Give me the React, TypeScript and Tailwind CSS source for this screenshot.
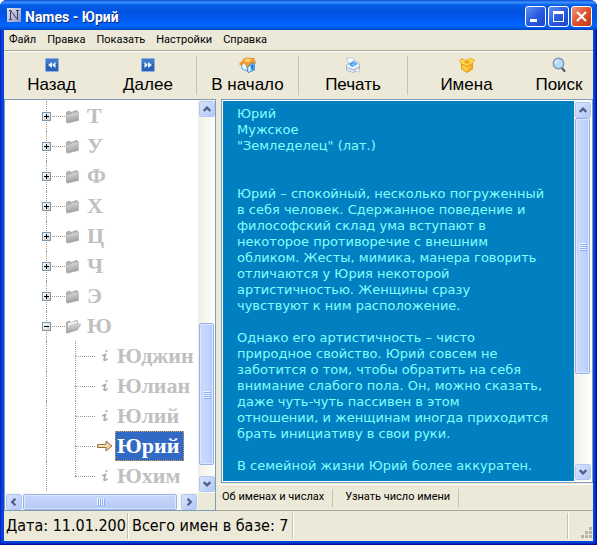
import React from 'react';

const bioText = `Юрий
Мужское
"Земледелец" (лат.)


Юрий – спокойный, несколько погруженный
в себя человек. Сдержанное поведение и
философский склад ума вступают в
некоторое противоречие с внешним
обликом. Жесты, мимика, манера говорить
отличаются у Юрия некоторой
артистичностью. Женщины сразу
чувствуют к ним расположение.

Однако его артистичность – чисто
природное свойство. Юрий совсем не
заботится о том, чтобы обратить на себя
внимание слабого пола. Он, можно сказать,
даже чуть-чуть пассивен в этом
отношении, и женщинам иногда приходится
брать инициативу в свои руки.

В семейной жизни Юрий более аккуратен.`;

const menuItems = ['Файл', 'Правка', 'Показать', 'Настройки', 'Справка'];
const letters = ['Т', 'У', 'Ф', 'Х', 'Ц', 'Ч', 'Э'];
const names = ['Юджин', 'Юлиан', 'Юлий', 'Юрий', 'Юхим'];
const selectedName = 'Юрий';

function AppIcon() {
    return (
        <svg width="14" height="14" viewBox="0 0 14 14">
            <defs>
                <linearGradient id="appIcon" x1="0" y1="0" x2="1" y2="1">
                    <stop offset="0" stopColor="#e4e6f4" />
                    <stop offset="1" stopColor="#8d97bd" />
                </linearGradient>
            </defs>
            <rect width="14" height="14" fill="url(#appIcon)" />
            <path d="M2 2.5h2.5M3.500 2.500v9M2 11.500h3M3.500 2.500l7 9M10.500 11.500v-9M9 2.500h3" stroke="#38406a" fill="none" />
        </svg>
    );
}

function SkipIcon({ forward = false }: { forward?: boolean }) {
    return (
        <svg width="16" height="16" viewBox="0 0 16 16">
            <rect x="1" y="1" width="14" height="14" rx="1.500" fill="#8fb0dc" />
            <rect x="2" y="2" width="12" height="12" fill="#2a62b8" />
            <path d="M2 2h12v5H2z" fill="#3f7acb" />
            {forward ? (
                <path d="M4.500 5v6L8 8zM8 5v6l4-3z" fill="#e8f2ff" />
            ) : (
                <path d="M8 5v6L4 8zM11.500 5v6L8 8z" fill="#e8f2ff" />
            )}
        </svg>
    );
}

function HomeIcon() {
    return (
        <svg width="17" height="16" viewBox="0 0 17 16">
            <path d="M2.500 8L6 4.500l5 5V15L3 12z" fill="#e8f6ff" stroke="#4aa9e8" />
            <path d="M8 10l4-6 3.500 3.500V13L9 15.500z" fill="#57aef0" stroke="#2474c8" strokeWidth=".7" />
            <path d="M9.500 10.500l2-1.500v5l-2 1z" fill="#fff" />
            <path d="M12.500 8.500l1.500-1v4l-1.500 1z" fill="#1a5cb4" />
            <path d="M.5 7L6 1l9 .5 1.500 5-4-1.500L8 10 5.500 5.500 2 8.500z" fill="#f9a22b" stroke="#d9791c" strokeWidth=".7" />
            <path d="M6 1.500l7 .5-2 2.500-5 .5z" fill="#ffd070" />
        </svg>
    );
}

function PrinterIcon() {
    return (
        <svg width="16" height="16" viewBox="0 0 16 16">
            <path d="M1.500 1.500l6-1 3 5-6 2z" fill="#fff" stroke="#a9c9ec" />
            <path d="M1.500 8l8-4.500 5 3.500v5L8 15.500 1.500 13z" fill="#eef4fc" stroke="#8aa8cc" strokeWidth=".8" />
            <path d="M4 7l5-2.500L12.500 7 7 10z" fill="#2e94ec" />
            <path d="M6 7.500l3-1.500 1.500 1-3 1.500z" fill="#9bd4ff" />
            <path d="M2 10.500L8 13l6-3" fill="none" stroke="#9aaac6" />
            <path d="M8 13l5 2 2-1.500-2-1.500z" fill="#fff" stroke="#9aaac6" strokeWidth=".6" />
        </svg>
    );
}

function BoxIcon() {
    return (
        <svg width="16" height="16" viewBox="0 0 16 16">
            <path d="M2.500 6.500l5.500 2 5.500-2v5.500L8 15.500 2.500 12z" fill="#fdc82e" stroke="#d48c10" strokeWidth=".8" />
            <path d="M8 8.500l5.500-2V12L8 15.500z" fill="#f2a81c" />
            <path d="M.5 3.500L3 1.500l3 2 4-1.500 2.500-.5 3 1.500-2 3.500L8 9 2.500 7z" fill="#ffdc52" stroke="#e09c14" strokeWidth=".8" />
            <path d="M4.500 5L8 3.500 12 5 8 7z" fill="#e8a420" />
            <path d="M6.500 10.500l2 2 2.500-3" fill="none" stroke="#ffee9a" />
        </svg>
    );
}

function SearchIcon() {
    return (
        <svg width="16" height="16" viewBox="0 0 16 16">
            <path d="M10.500 10.500l3 3.500" stroke="#54585f" strokeWidth="2.200" strokeLinecap="round" />
            <circle cx="7.500" cy="6.500" r="5.200" fill="#b4dcfa" stroke="#8393b4" strokeWidth="1.400" />
            <path d="M4.500 6.500a3 3 0 0 1 3-3" stroke="#eaf7ff" fill="none" strokeWidth="1.300" />
        </svg>
    );
}

function FolderIcon({ open = false }: { open?: boolean }) {
    return (
        <svg width="16" height="15" viewBox="0 0 16 15" className="shrink-0">
            <defs>
                <linearGradient id="folder" x1="0" y1="0" x2="0.300" y2="1">
                    <stop offset="0" stopColor="#e4e4e4" />
                    <stop offset="1" stopColor="#9c9c9c" />
                </linearGradient>
            </defs>
            <path d="M1 3l3.500-1.500L6 3l5.500-2 1.500 1v3L2 14 1 13z" fill="#b0b0b0" />
            {open ? (
                <>
                    <path d="M3 4l9-2v5l-9 3z" fill="#ededed" />
                    <path d="M1 13.500L4.500 7 10 5.500l1-.5h5L12.500 11 2 14.200z" fill="url(#folder)" stroke="#a4a4a4" strokeWidth=".5" />
                </>
            ) : (
                <path d="M1.500 6L6 5l1.500-1.500L13.500 3v8.500L2 14.200z" fill="url(#folder)" stroke="#a8a8a8" strokeWidth=".5" />
            )}
        </svg>
    );
}

function InfoIcon() {
    return (
        <svg width="8" height="12" viewBox="0 0 8 12">
            <path d="M4.500 1h2" stroke="#a8a8a8" strokeWidth="1.600" />
            <path d="M1 6l3.500-1.500L3 9.500c0 1.500 2 1 3.500-1" fill="none" stroke="#a8a8a8" strokeWidth="1.500" />
        </svg>
    );
}

function ArrowIcon() {
    return (
        <svg width="16" height="12" viewBox="0 0 16 12">
            <path d="M.5 4.500h8.500v-3.500l6 5-6 5V7.500H.5z" fill="#f6cf92" stroke="#8f7048" />
            <path d="M2 5.500h8V4" stroke="#fff0cf" fill="none" />
        </svg>
    );
}

const arrowPaths = {
    up: 'M4 9.500L7.500 6 11 9.500',
    down: 'M4 5.500L7.500 9 11 5.500',
    left: 'M9 4L5.500 7.500 9 11',
    right: 'M6 4l3.500 3.500L6 11',
};

function ScrollButton({ dir }: { dir: 'up' | 'down' | 'left' | 'right' }) {
    return (
        <button type="button" aria-label={dir}
            className="size-4 shrink-0 rounded-xs border border-white bg-gradient-to-br from-[#d7e2fe] to-[#b4c8f8] outline -outline-offset-1 outline-[#b3c8f0]">
            <svg width="14" height="14" viewBox="0 0 15 15">
                <path d={arrowPaths[dir]} fill="none" stroke="#4d6185" strokeWidth="2.400" />
            </svg>
        </button>
    );
}

function VScroll({ children }: { children: React.ReactNode }) {
    return (
        <div className="flex w-[17px] shrink-0 flex-col items-center bg-gradient-to-r from-[#f0efe6] to-[#fefefc] py-px">
            <ScrollButton dir="up" />
            <div className="flex w-full min-h-0 flex-1 flex-col">{children}</div>
            <ScrollButton dir="down" />
        </div>
    );
}

function VThumb({ className }: { className: string }) {
    return (
        <div className={`mx-px flex flex-col items-center justify-center gap-px rounded-xs border border-[#98b3ea] bg-gradient-to-r from-[#c9d7fc] via-[#c6d5fd] to-[#b5c9f7] ring-1 ring-inset ring-[#dce7ff] ${className}`}>
            {[0, 1, 2, 3].map(i => (
                <span key={i} className="h-px w-[7px] bg-[#eef4fe] shadow-[1px_1px_0_#8cb0f8]" />
            ))}
        </div>
    );
}

function ToolButton({ label, icon, divider = false }: { label: string; icon: React.ReactNode; divider?: boolean }) {
    return (
        <button type="button" className={`my-1 flex flex-col items-center border-r ${divider ? 'border-[#c5c2b2]' : 'border-transparent'}`}>
            <span className="flex h-[18px] items-center">{icon}</span>
            <span className="whitespace-nowrap text-[17px] leading-[21px]">{label}</span>
        </button>
    );
}

function TreeLetter({ letter, open = false }: { letter: string; open?: boolean }) {
    return (
        <li className="flex h-[30px] items-center">
            <span className="relative ml-[41px] flex h-full w-[19px] items-center border-l border-dotted border-[#a09c8c]">
                <span className="w-full border-t border-dotted border-[#a09c8c]" />
                <button type="button" aria-label={letter}
                    className="absolute -left-[5px] flex size-[9px] items-center justify-center border border-[#7898b5] bg-gradient-to-br from-white to-[#d6d1c4]">
                    <span className="absolute h-px w-[5px] bg-black" />
                    {!open && <span className="absolute h-[5px] w-px bg-black" />}
                </button>
            </span>
            <FolderIcon open={open} />
            <span className="ml-[6px] text-[22px] leading-[28px]">{letter}</span>
        </li>
    );
}

function TreeName({ name, last = false }: { name: string; last?: boolean }) {
    const active = name === selectedName;
    return (
        <li className="flex h-[30px] items-center">
            <span className="ml-[41px] h-full w-[29px] shrink-0 border-l border-dotted border-[#a09c8c]" />
            <span className="flex h-full w-5 shrink-0 flex-col">
                <span className="flex-1 border-l border-dotted border-[#a09c8c]" />
                <span className={`flex-1 border-t border-dotted border-[#a09c8c] ${last ? '' : 'border-l'}`} />
            </span>
            <span className="flex w-5 shrink-0 justify-center">{active ? <ArrowIcon /> : <InfoIcon />}</span>
            <button type="button"
                className={`h-[30px] border pl-px text-[22px] leading-[28px] whitespace-nowrap ${active ? 'border-dotted border-[#e0a040] bg-[#316ac5] pr-1 text-white' : 'border-transparent'}`}>
                {name}
            </button>
        </li>
    );
}

function TitleBar() {
    return (
        <header className="flex h-[30px] shrink-0 items-center bg-[linear-gradient(#0a4ad6,#3a93ff_8%,#0860ea_16%,#0053e0_35%,#0058ee_60%,#0066ff_85%,#0054dc_95%,#0040b8)] pr-[5px] pl-[7px]">
            <AppIcon />
            <h1 className="ml-1 flex-1 pt-1 font-['Roboto',sans-serif] text-[14px] leading-4 font-bold text-white [text-shadow:1px_1px_0_#0a2a80]">
                Names - Юрий
            </h1>
            <div className="flex gap-[2px] pt-[3px]">
                <button type="button" aria-label="Свернуть" className="size-[21px] rounded-[3px] border border-white bg-gradient-to-br from-[#6590f0] via-[#2a5be0] to-[#1a48c8]">
                    <svg width="19" height="19" viewBox="0 0 19 19"><path d="M4 12h7v3H4z" fill="#fff" /></svg>
                </button>
                <button type="button" aria-label="Развернуть" className="size-[21px] rounded-[3px] border border-white bg-gradient-to-br from-[#6590f0] via-[#2a5be0] to-[#1a48c8]">
                    <svg width="19" height="19" viewBox="0 0 19 19"><path d="M4 4h11v11H4zM5 7v7h9V7z" fill="#fff" fillRule="evenodd" /></svg>
                </button>
                <button type="button" aria-label="Закрыть" className="size-[21px] rounded-[3px] border border-white bg-gradient-to-br from-[#f0937a] via-[#e0502c] to-[#c03a14]">
                    <svg width="19" height="19" viewBox="0 0 19 19"><path d="M5 5l9 9M14 5l-9 9" stroke="#fff" strokeWidth="2.200" /></svg>
                </button>
            </div>
        </header>
    );
}

function NameTree() {
    return (
        <aside className="flex w-[212px] shrink-0 flex-col border border-[#7f9db9] bg-white">
            <div className="flex min-h-0 flex-1">
                <ul className="min-w-0 flex-1 overflow-hidden pt-px font-['Liberation_Serif',serif] font-bold text-[#c0c0c0]">
                    {letters.map(l => <TreeLetter key={l} letter={l} />)}
                    <TreeLetter letter="Ю" open />
                    {names.map((n, i) => <TreeName key={n} name={n} last={i === names.length - 1} />)}
                </ul>
                <VScroll>
                    <div className="flex-206" />
                    <VThumb className="flex-140" />
                    <div className="flex-11" />
                </VScroll>
            </div>
            <div className="flex h-[17px] shrink-0 items-center bg-[#ece9d8]">
                <div className="flex h-full min-w-0 flex-1 items-center bg-[#f7f6f0] px-px">
                    <ScrollButton dir="left" />
                    <div className="ml-px flex h-4 flex-1 items-center justify-center gap-px rounded-xs border border-[#98b3ea] bg-gradient-to-b from-[#c9d7fc] to-[#b5c9f7] ring-1 ring-inset ring-[#dce7ff]">
                        {[0, 1, 2, 3].map(i => (
                            <span key={i} className="h-[7px] w-px bg-[#eef4fe] shadow-[1px_1px_0_#8cb0f8]" />
                        ))}
                    </div>
                    <span className="w-1" />
                    <ScrollButton dir="right" />
                </div>
                <span className="w-[17px]" />
            </div>
        </aside>
    );
}

export default function App() {
    return (
        <div className="h-screen bg-white font-['DejaVu_Sans_Condensed','DejaVu_Sans',sans-serif] text-black">
            <div className="flex h-full flex-col overflow-hidden rounded-t-[7px] bg-[#0842d8] shadow-[inset_1px_0_0_#0020c8,inset_-1px_-1px_0_#00138c,inset_-2px_-2px_0_#0028c0]">
                <TitleBar />
                <div className="mx-1 mb-1 flex min-h-0 flex-1 flex-col bg-[#ece9d8]">
                    <nav className="flex h-[21px] shrink-0 items-center gap-[11px] border-b border-[#aca899] px-[5px] font-['Roboto',sans-serif] text-[11px]">
                        {menuItems.map(m => <button key={m} type="button">{m}</button>)}
                    </nav>
                    <div className="grid h-12 shrink-0 grid-cols-[96fr_97fr_102fr_109fr_118fr_67fr] border-t border-white font-['Liberation_Sans',sans-serif]">
                        <ToolButton label="Назад" icon={<SkipIcon />} />
                        <ToolButton label="Далее" icon={<SkipIcon forward />} divider />
                        <ToolButton label="В начало" icon={<HomeIcon />} divider />
                        <ToolButton label="Печать" icon={<PrinterIcon />} divider />
                        <ToolButton label="Имена" icon={<BoxIcon />} />
                        <ToolButton label="Поиск" icon={<SearchIcon />} />
                    </div>

                    <main className="flex min-h-0 flex-1">
                        <NameTree />
                        <div className="flex min-w-0 flex-1 flex-col">
                            <section className="ml-[5px] flex min-h-0 flex-1 border border-[#7f9db9] bg-white p-px">
                                <article className="min-w-0 flex-1 overflow-hidden bg-[#0080c0] pt-[5px] pl-[14px] font-['DejaVu_Sans',sans-serif] text-[13px] leading-4 whitespace-pre text-[#80ffff]">
                                    {bioText}
                                </article>
                                <VScroll>
                                    <VThumb className="flex-257" />
                                    <div className="flex-91" />
                                </VScroll>
                            </section>
                            <div className="mt-px flex h-[27px] shrink-0 items-center border-t border-b border-t-white border-b-[#aca899] font-['Roboto',sans-serif] text-[11px]">
                                <button type="button" className="h-[18px] border-r border-[#c5c2b2] pr-2 pl-[6px]">Об именах и числах</button>
                                <button type="button" className="h-[18px] border-r border-[#c5c2b2] pr-2 pl-3">Узнать число имени</button>
                            </div>
                        </div>
                    </main>

                    <footer className="flex h-[30px] shrink-0 items-center text-[16px] leading-[26px] whitespace-nowrap">
                        <span className="w-[124px] overflow-hidden border-r border-[#c5c2b2] pl-[2px]">Дата: 11.01.200</span>
                        <span className="w-[165px] overflow-hidden border-r border-[#c5c2b2] border-l border-l-white pl-[3px]">Всего имен в базе: 7</span>
                        <span className="h-[26px] flex-1 border-r border-[#c5c2b2] border-l border-l-white" />
                        <span className="flex h-[26px] w-[25px] items-end justify-end border-l border-white">
                            <svg width="12" height="12" viewBox="0 0 12 12" fill="#b8b4a2">
                                <path d="M8 0h3v3H8zM8 4h3v3H8zM4 4h3v3H4zM8 8h3v3H8zM4 8h3v3H4zM0 8h3v3H0z" />
                            </svg>
                        </span>
                    </footer>
                </div>
            </div>
        </div>
    );
}
